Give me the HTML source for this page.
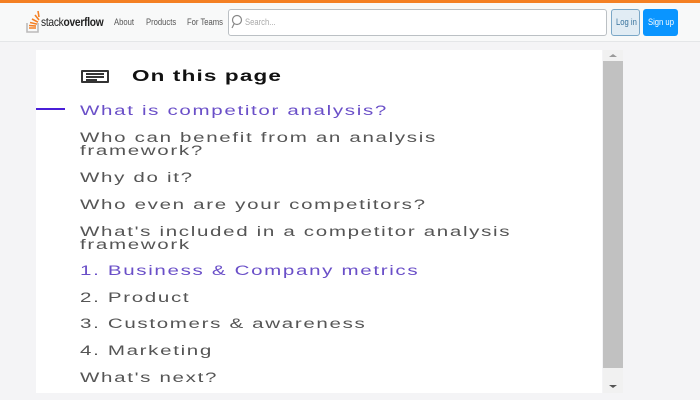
<!DOCTYPE html>
<html><head><style>
*{margin:0;padding:0;box-sizing:border-box}
body{width:700px;height:400px;overflow:hidden;background:#f4f4f6;font-family:"Liberation Sans",sans-serif;position:relative}
.top{position:absolute;left:0;top:0;width:700px;height:3px;background:#f48024}
.hdr{position:absolute;left:0;top:3px;width:700px;height:39px;background:#f8f9f9;border-bottom:1px solid #e4e6e8}
.nav{position:absolute;top:17px;font-size:9px;color:#555;transform:scaleX(.85);transform-origin:left;white-space:nowrap}
.search{position:absolute;left:228px;top:9px;width:379px;height:27px;background:#fff;border:1px solid #bbc0c4;border-radius:3px}
.panel{position:absolute;left:36px;top:50px;width:566px;height:343px;background:#fff}
.it{position:absolute;left:80px;font-size:13.5px;letter-spacing:1.1px;color:#555;line-height:13px;white-space:nowrap;transform:scaleX(1.52);transform-origin:left}
.sb{position:absolute;left:603px;top:50px;width:20px;height:343px;background:#f1f1f1}
.th{position:absolute;left:603px;top:61px;width:20px;height:307px;background:#c1c1c1}
</style></head><body>
<div class="top"></div>
<div class="hdr"></div>
<svg style="position:absolute;left:26px;top:9px" width="14" height="24" viewBox="0 0 14 24"><path d="M1 14v9h11v-9" fill="none" stroke="#bcbbbb" stroke-width="1.6"/><path d="M3 19h7M3 16.5l7 .6M4 13.5l7 1.6M6 10l6 3.2M9 6l4 5M12 2l1 6" stroke="#f48024" stroke-width="1.6"/></svg>
<div style="position:absolute;left:41px;top:15px;font-size:12px;color:#222;letter-spacing:-.3px;transform:scaleX(.85);transform-origin:left;white-space:nowrap">stack<b>overflow</b></div>
<div class="nav" style="left:114px">About</div>
<div class="nav" style="left:146px">Products</div>
<div class="nav" style="left:187px">For Teams</div>
<div class="search"></div>
<svg style="position:absolute;left:231px;top:14px" width="13" height="15"><circle cx="6" cy="6" r="4.5" fill="none" stroke="#888" stroke-width="1.2"/><path d="M3 10l-2 4" stroke="#888" stroke-width="1.2"/></svg>
<div class="nav" style="left:245px;color:#aaa;top:17px">Search...</div>
<div style="position:absolute;left:611px;top:9px;width:29px;height:27px;background:#e1ecf4;border:1px solid #7aa7c7;border-radius:3px"></div>
<div class="nav" style="left:616px;color:#39739d">Log in</div>
<div style="position:absolute;left:643px;top:9px;width:35px;height:27px;background:#0a95ff;border-radius:3px"></div>
<div class="nav" style="left:648px;color:#fff">Sign up</div>
<div class="panel"></div>
<div class="sb"></div><div class="th"></div>
<div style="position:absolute;left:609px;top:54px;border:4px solid transparent;border-bottom:3px solid #999;border-top:0"></div>
<div style="position:absolute;left:609px;top:385px;border:4px solid transparent;border-top:3px solid #555;border-bottom:0"></div>
<div style="position:absolute;left:81px;top:70px;width:28px;height:13px;border:2px solid #333;border-radius:1px"></div>
<div style="position:absolute;left:86px;top:73px;width:18px;height:1.5px;background:#333"></div>
<div style="position:absolute;left:86px;top:76px;width:18px;height:1.5px;background:#333"></div>
<div style="position:absolute;left:86px;top:79px;width:11px;height:1.5px;background:#333"></div>
<div style="position:absolute;left:132px;top:68px;font-size:15.5px;font-weight:bold;color:#111;letter-spacing:.8px;white-space:nowrap;transform:scaleX(1.45);transform-origin:left">On this page</div>
<div style="position:absolute;left:36px;top:108px;width:29px;height:2px;background:#4a1fd8"></div>
<div class="it" style="top:104px;color:#6a4fc8">What is competitor analysis?</div>
<div class="it" style="top:131px">Who can benefit from an analysis<br>framework?</div>
<div class="it" style="top:171px">Why do it?</div>
<div class="it" style="top:198px">Who even are your competitors?</div>
<div class="it" style="top:225px">What's included in a competitor analysis<br>framework</div>
<div class="it" style="top:264px;color:#6a4fc8">1. Business &amp; Company metrics</div>
<div class="it" style="top:291px">2. Product</div>
<div class="it" style="top:317px">3. Customers &amp; awareness</div>
<div class="it" style="top:344px">4. Marketing</div>
<div class="it" style="top:371px">What's next?</div>
</body></html>
